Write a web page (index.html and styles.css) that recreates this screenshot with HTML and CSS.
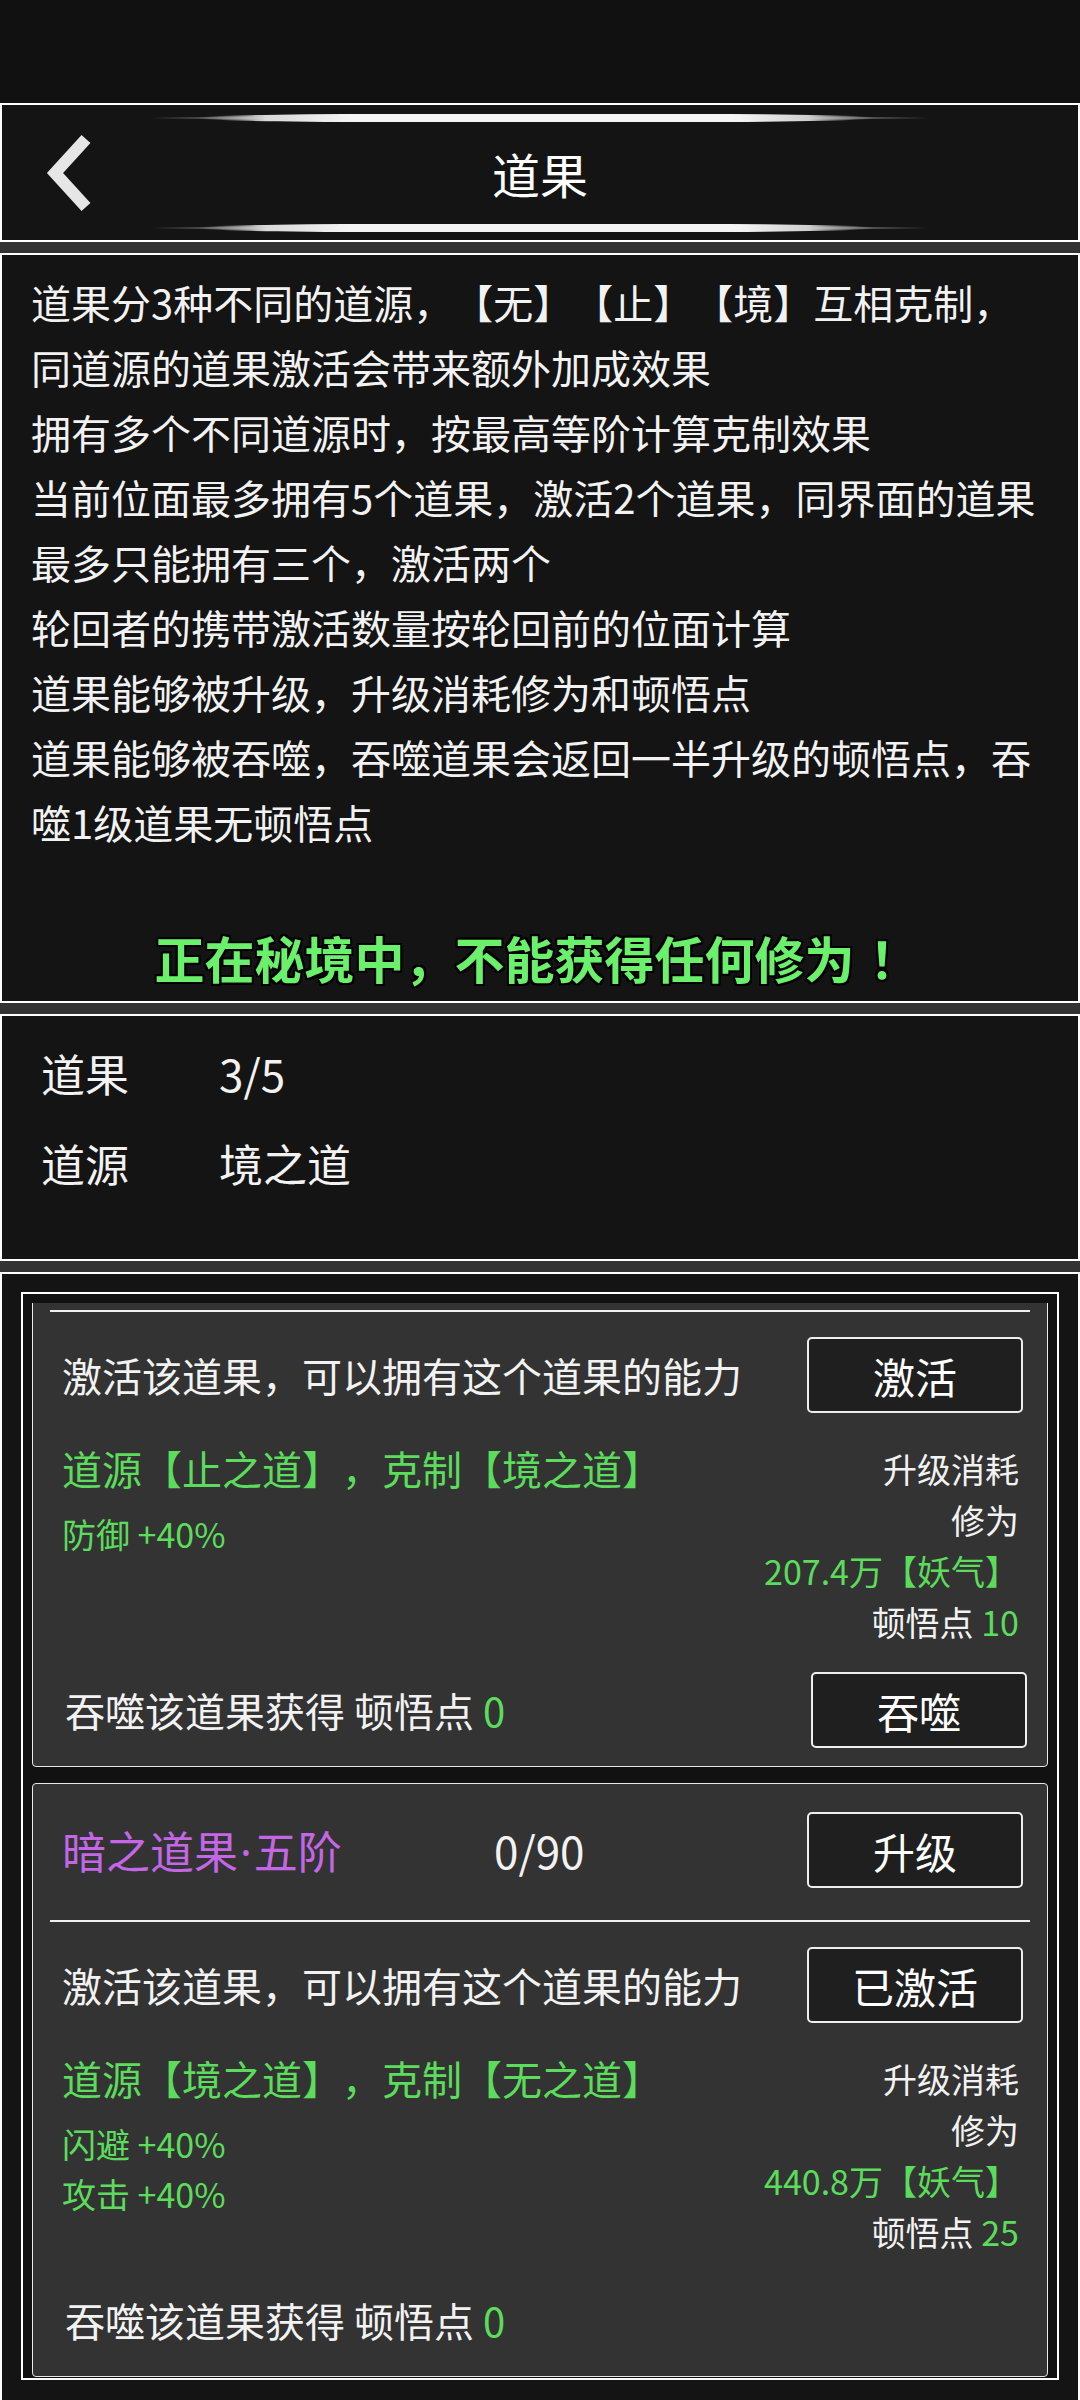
FILE: index.html
```html
<!DOCTYPE html>
<html lang="zh-CN">
<head>
<meta charset="utf-8">
<title>道果</title>
<link rel="stylesheet" href="styles.css">
</head>
<body>
<div class="statusbar"></div>
<div class="panels">
  <header class="panel header">
    <div class="deco"></div>
    <div class="header-row">
      <div class="back">
        <svg class="back-icon" width="54" height="80" viewBox="0 0 54 80" aria-hidden="true">
          <path d="M42 6 L11 40 L42 74" fill="none" stroke="#e6e6e6" stroke-width="12" stroke-linejoin="miter"/>
        </svg>
      </div>
      <h1 class="title">道果</h1>
      <div></div>
    </div>
    <div class="deco"></div>
  </header>

  <section class="panel desc">
    <p>道果分3种不同的道源，【无】【止】【境】互相克制，同道源的道果激活会带来额外加成效果</p>
    <p>拥有多个不同道源时，按最高等阶计算克制效果</p>
    <p>当前位面最多拥有5个道果，激活2个道果，同界面的道果最多只能拥有三个，激活两个</p>
    <p>轮回者的携带激活数量按轮回前的位面计算</p>
    <p>道果能够被升级，升级消耗修为和顿悟点</p>
    <p>道果能够被吞噬，吞噬道果会返回一半升级的顿悟点，吞噬1级道果无顿悟点</p>
    <div class="banner">正在秘境中，不能获得任何修为<span class="excl">！</span></div>
  </section>

  <section class="panel stats">
    <div class="stat-label">道果</div><div class="stat-value">3/5</div>
    <div class="stat-label">道源</div><div class="stat-value">境之道</div>
  </section>

  <section class="panel listpanel">
    <div class="frame">
      <div class="viewport">
        <div class="list">
          <div class="card">
            <div class="card-head"></div>
            <div class="sep"></div>
            <div class="row">
              <div class="row-text">激活该道果，可以拥有这个道果的能力</div>
              <div class="btn">激活</div>
            </div>
            <div class="body">
              <div class="effects">
                <div class="source">道源【止之道】，克制【境之道】</div>
                <div class="attrs">
                  <div>防御 +40%</div>
                </div>
              </div>
              <div class="costs">
                <div>升级消耗</div>
                <div>修为</div>
                <div class="green">207.4万【妖气】</div>
                <div>顿悟点 <span class="green">10</span></div>
              </div>
            </div>
            <div class="row devour">
              <div class="row-text">吞噬该道果获得 顿悟点 <span class="green">0</span></div>
              <div class="btn">吞噬</div>
            </div>
          </div>

          <div class="card">
            <div class="card-head">
              <div class="fruit-name">暗之道果<span class="dot">·</span>五阶</div>
              <div class="fruit-exp">0/90</div>
              <div class="btn">升级</div>
            </div>
            <div class="sep"></div>
            <div class="row">
              <div class="row-text">激活该道果，可以拥有这个道果的能力</div>
              <div class="btn">已激活</div>
            </div>
            <div class="body">
              <div class="effects">
                <div class="source">道源【境之道】，克制【无之道】</div>
                <div class="attrs">
                  <div>闪避 +40%</div>
                  <div>攻击 +40%</div>
                </div>
              </div>
              <div class="costs">
                <div>升级消耗</div>
                <div>修为</div>
                <div class="green">440.8万【妖气】</div>
                <div>顿悟点 <span class="green">25</span></div>
              </div>
            </div>
            <div class="row devour">
              <div class="row-text">吞噬该道果获得 顿悟点 <span class="green">0</span></div>
            </div>
          </div>
        </div>
      </div>
    </div>
  </section>
</div>
</body>
</html>
```

FILE: styles.css
```css
* {
  box-sizing: border-box;
}

html, body {
  margin: 0;
  padding: 0;
}

body {
  width: 1080px;
  height: 2400px;
  overflow: hidden;
  background: #333333;
  color: #f0f0f0;
  font-family: "Noto Sans CJK SC", "Noto Sans", sans-serif;
  text-spacing-trim: space-all;
  display: flex;
  flex-direction: column;
}

.statusbar {
  height: 103px;
  background: #111111;
  flex: none;
}

.panels {
  flex: 1;
  display: flex;
  flex-direction: column;
  gap: 11px;
}

.panel {
  border: 2px solid #ffffff;
  background: #141414;
  flex: none;
}

/* Header */
.header {
  height: 139px;
  padding: 9px 0 8px;
  display: flex;
  flex-direction: column;
}

.deco {
  position: relative;
  width: 778px;
  height: 8px;
  margin: 0 auto;
  flex: none;
}

.deco::before {
  content: "";
  position: absolute;
  left: 0;
  right: 0;
  top: 3px;
  height: 2px;
  background: linear-gradient(90deg, rgba(90,90,90,0) 0%, #555 8%, #777 30%, #777 70%, #555 92%, rgba(90,90,90,0) 100%);
}

.deco::after {
  content: "";
  position: absolute;
  left: 6%;
  right: 7%;
  top: 0;
  height: 8px;
  border-radius: 180px / 4px;
  background: linear-gradient(90deg, rgba(255,255,255,0) 0%, #d8d8d8 10%, #f4f4f4 22%, #f4f4f4 80%, #d0d0d0 90%, rgba(255,255,255,0) 100%);
}

.header-row {
  flex: 1;
  display: grid;
  grid-template-columns: 1fr auto 1fr;
  align-items: center;
}

.back {
  padding-left: 42px;
  display: flex;
  align-items: center;
}

.back-icon {
  display: block;
}

.title {
  margin: 0;
  font-size: 48px;
  font-weight: 400;
  color: #ffffff;
  line-height: 1;
}

/* Description */
.desc {
  height: 750px;
  padding: 15px 35px 9px 29px;
  font-size: 40px;
  line-height: 65px;
  color: #f2f2f2;
}

.desc p {
  margin: 0;
}

.banner {
  margin-top: 67px;
  font-size: 50px;
  line-height: 70px;
  font-weight: 700;
  text-align: center;
  color: #6af06a;
  text-shadow:
    2px 0 0 #000, -2px 0 0 #000, 0 2px 0 #000, 0 -2px 0 #000,
    2px 2px 0 #000, -2px 2px 0 #000, 2px -2px 0 #000, -2px -2px 0 #000;
}

.banner .excl {
  padding-left: 15px;
}

/* Stats */
.stats {
  height: 247px;
  padding: 12px 39px 51px;
  display: grid;
  grid-template-columns: 178px 1fr;
  grid-auto-rows: 90px;
  align-items: center;
  font-size: 44px;
  line-height: 90px;
  color: #f2f2f2;
}

/* List panel */
.listpanel {
  flex: 1;
  border-bottom: 0;
  padding: 18px 19px 0;
}

.frame {
  border: 2px solid #ffffff;
  background: #111111;
  padding: 9px 9px 0;
}

.viewport {
  height: 1075px;
  overflow: hidden;
}

.list {
  margin-top: -130px;
  display: flex;
  flex-direction: column;
  gap: 16px;
}

.card {
  border: 1px solid #e8e8e8;
  border-radius: 4px;
  background: #333333;
  padding: 28px 24px 18px 29px;
  color: #f2f2f2;
}

.card-head {
  height: 76px;
  display: flex;
  align-items: center;
}

.fruit-name {
  width: 432px;
  font-size: 44px;
  color: #c467e6;
}

.fruit-name .dot {
  font-family: "Noto Sans", "DejaVu Sans", sans-serif;
  margin: 0 2px;
}

.fruit-exp {
  flex: 1;
  font-size: 44px;
  color: #f2f2f2;
}

.sep {
  height: 2px;
  background: #f0f0f0;
  margin: 32px -7px 0 -12px;
}

.row {
  height: 76px;
  margin-top: 25px;
  display: flex;
  align-items: center;
  justify-content: space-between;
}

.row-text {
  font-size: 40px;
  white-space: nowrap;
}

.btn {
  width: 216px;
  height: 76px;
  flex: none;
  border: 2px solid #eeeeee;
  border-radius: 5px;
  background: #1f1f1f;
  display: flex;
  align-items: center;
  justify-content: center;
  font-size: 42px;
  color: #ffffff;
  margin-left: auto;
}

.body {
  margin-top: 30px;
  display: flex;
  justify-content: space-between;
  align-items: flex-start;
}

.effects {
  color: #5cdc5c;
}

.source {
  font-size: 40px;
  line-height: 51px;
}

.attrs {
  margin-top: 15px;
  font-size: 34px;
  line-height: 50px;
}

.costs {
  padding-right: 4px;
  text-align: right;
  font-size: 34px;
  line-height: 51px;
}

.green {
  color: #5cdc5c;
}

.devour {
  margin-top: 25px;
  margin-left: 3px;
  margin-right: -4px;
}
```
